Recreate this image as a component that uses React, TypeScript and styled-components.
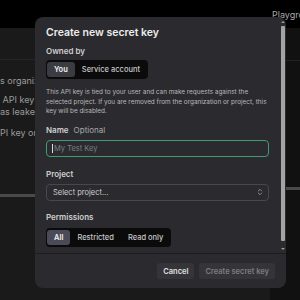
import React from "react";
import styled, { createGlobalStyle } from "styled-components";
import { ChevronsUpDown } from "lucide-react";

const Global = createGlobalStyle`
  html, body { margin: 0; padding: 0; background: #000; }
  body { font-family: Inter, "Noto Sans", sans-serif; -webkit-font-smoothing: antialiased; }
  * { box-sizing: border-box; }
`;

const Page = styled.div`
  position: relative;
  width: 300px;
  height: 300px;
  overflow: hidden;
  display: flex;
  flex-direction: column;
  background: #000;
`;

const TopBar = styled.div`
  height: 28px;
  flex: none;
  display: flex;
  align-items: center;
  padding-left: 272px;
  color: #a8a8a8;
  font-size: 9px;
  white-space: nowrap;
`;

const Main = styled.div`
  flex: 1;
  display: flex;
`;

const Content = styled.div`
  flex: 1;
  background: #1a1a1a;
  display: flex;
  flex-direction: column;
`;

const ContentHeader = styled.div`
  height: 32px;
  border-bottom: 1px solid #242424;
`;

const BgText = styled.div<{ $mt?: number }>`
  margin-top: ${(p) => p.$mt ?? 0}px;
  color: #9a9a9a;
  font-size: 9px;
  line-height: 12px;
  white-space: nowrap;
`;

const BgBar = styled.div<{ $mt: number }>`
  margin-top: ${(p) => p.$mt}px;
  height: 3px;
  background: #4a4a4a;
`;

const SidePanel = styled.div`
  width: 30px;
  background: #111;
  display: flex;
  flex-direction: column;
`;

const SideHeader = styled.div`
  height: 33px;
  border-bottom: 1px solid #222;
`;

const Modal = styled.div`
  position: absolute;
  left: 35px;
  top: 17px;
  width: 251px;
  height: 271px;
  background: #2b2b2f;
  border-radius: 8px;
  display: flex;
  flex-direction: column;
  overflow: hidden;
`;

const Body = styled.div`
  position: relative;
  flex: 1;
  padding: 9px 17px 0 11px;
  display: flex;
  flex-direction: column;
`;

const Title = styled.div`
  font-size: 10.5px;
  line-height: 14px;
  font-weight: 600;
  color: #ececec;
`;

const Label = styled.div<{ $mt: number }>`
  margin-top: ${(p) => p.$mt}px;
  font-size: 8px;
  line-height: 12px;
  font-weight: 600;
  color: #d0d0d0;
  display: flex;
  gap: 5px;
`;

const Optional = styled.span`
  font-weight: 400;
  color: #a8a8a8;
`;

const Segments = styled.div<{ $mt: number }>`
  margin-top: ${(p) => p.$mt}px;
  align-self: flex-start;
  display: flex;
  height: 19px;
  padding: 2px 1px;
  background: #0b0b0c;
  border-radius: 4px;
`;

const Segment = styled.div<{ $active?: boolean; $tone?: string }>`
  display: flex;
  align-items: center;
  padding: 0 7px;
  border-radius: 3px;
  font-size: 7.5px;
  font-weight: ${(p) => (p.$active ? 600 : 500)};
  color: ${(p) => (p.$active ? "#f2f2f2" : "#c8c8c8")};
  background: ${(p) => (p.$active ? p.$tone ?? "#3b3b42" : "transparent")};
`;

const Description = styled.p`
  margin: 9px 0 0;
  font-size: 6.4px;
  line-height: 9.5px;
  color: #b8b8b8;
`;

const InputBox = styled.div<{ $mt: number }>`
  margin-top: ${(p) => p.$mt}px;
  height: 17px;
  border: 1.5px solid #3f9b72;
  border-radius: 4px;
  display: flex;
  align-items: center;
  padding-left: 5px;
  gap: 1px;
  font-size: 7.5px;
  color: #7e7e82;
`;

const Caret = styled.span`
  width: 1px;
  height: 9px;
  background: #d8d8d8;
`;

const SelectBox = styled.div<{ $mt: number }>`
  margin-top: ${(p) => p.$mt}px;
  height: 17px;
  border: 1px solid #47474d;
  border-radius: 4px;
  display: flex;
  align-items: center;
  justify-content: space-between;
  padding: 0 4px 0 6px;
  font-size: 7.5px;
  color: #cfcfcf;
`;

const Scrollbar = styled.div`
  position: absolute;
  top: 1px;
  right: 0;
  bottom: 0;
  width: 6px;
  display: flex;
  flex-direction: column;
  align-items: center;
`;

const Arrow = styled.div<{ $down?: boolean }>`
  width: 0;
  height: 0;
  margin: 3px 0;
  border-left: 2px solid transparent;
  border-right: 2px solid transparent;
  ${(p) => (p.$down ? "border-top: 2px solid #9a9a9a;" : "border-bottom: 2px solid #9a9a9a;")}
`;

const Thumb = styled.div`
  flex: 1;
  width: 4px;
  margin-bottom: 4px;
  background: #a3a3a3;
  border-radius: 1px;
`;

const Footer = styled.div`
  flex: none;
  height: 35px;
  border-top: 1px solid #1d1d20;
  display: flex;
  align-items: center;
  justify-content: flex-end;
  gap: 5px;
  padding-right: 11px;
`;

const Button = styled.div<{ $dim?: boolean }>`
  height: 16px;
  display: flex;
  align-items: center;
  padding: 0 6px;
  border-radius: 3px;
  background: #343439;
  font-size: 7.5px;
  font-weight: 600;
  color: ${(p) => (p.$dim ? "#7d7d82" : "#e0e0e0")};
`;

export default function App() {
  return (
    <>
      <Global />
      <Page>
        <TopBar>Playground</TopBar>
        <Main>
          <Content>
            <ContentHeader />
            <BgText $mt={15}>s organization</BgText>
            <BgText $mt={7}>&nbsp;API key will</BgText>
            <BgText $mt={0}>as leaked</BgText>
            <BgText $mt={9}>PI key on the</BgText>
            <BgBar $mt={55} />
          </Content>
          <SidePanel>
            <SideHeader />
            <BgText $mt={32}>you</BgText>
            <BgBar $mt={82} />
          </SidePanel>
        </Main>
        <Modal>
          <Body>
            <Title>Create new secret key</Title>
            <Label $mt={5}>Owned by</Label>
            <Segments $mt={3}>
              <Segment $active>You</Segment>
              <Segment>Service account</Segment>
            </Segments>
            <Description>
              This API key is tied to your user and can make requests against the selected project. If you are
              removed from the organization or project, this key will be disabled.
            </Description>
            <Label $mt={7}>
              <span>Name</span>
              <Optional>Optional</Optional>
            </Label>
            <InputBox $mt={4}>
              <Caret />
              <span>My Test Key</span>
            </InputBox>
            <Label $mt={11}>Project</Label>
            <SelectBox $mt={4}>
              <span>Select project...</span>
              <ChevronsUpDown size={8} color="#bdbdbd" strokeWidth={2} />
            </SelectBox>
            <Label $mt={10}>Permissions</Label>
            <Segments $mt={5}>
              <Segment $active $tone="#4a4b56">All</Segment>
              <Segment>Restricted</Segment>
              <Segment>Read only</Segment>
            </Segments>
            <Scrollbar>
              <Arrow />
              <Thumb />
              <Arrow $down />
            </Scrollbar>
          </Body>
          <Footer>
            <Button>Cancel</Button>
            <Button $dim>Create secret key</Button>
          </Footer>
        </Modal>
      </Page>
    </>
  );
}
